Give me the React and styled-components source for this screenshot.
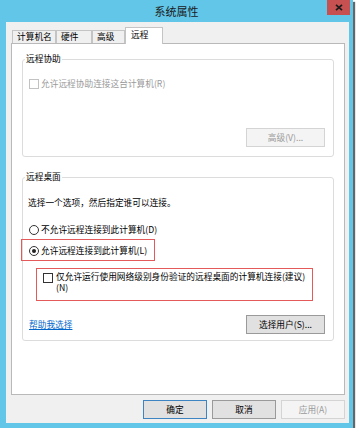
import React from 'react';
import styled, { createGlobalStyle } from 'styled-components';

const Global = createGlobalStyle`
  html, body { margin: 0; padding: 0; background: #ffffff; }
  body {
    font-family: "Noto Sans CJK SC", "Noto Sans", sans-serif;
    font-size: 8.7px;
    color: #000;
  }
  * { box-sizing: border-box; }
`;

const Window = styled.div`
  width: 353px;
  height: 428px;
  background: #62c6e8;
  display: flex;
  flex-direction: column;
  box-shadow: 2px 2px 1px rgba(0, 0, 0, 0.6);
`;

const TitleBar = styled.div`
  height: 22px;
  flex: none;
  display: grid;
  grid-template-columns: 1fr auto 1fr;
  padding: 0 3px;
`;

const Title = styled.div`
  grid-column: 2;
  font-size: 11px;
  line-height: 21px;
  padding-top: 1px;
  color: #1a1a1a;
`;

const CloseButton = styled.div`
  grid-column: 3;
  justify-self: end;
  align-self: start;
  width: 23px;
  height: 15px;
  background: #c75050;
  display: flex;
  align-items: center;
  justify-content: center;
`;

const Client = styled.div`
  flex: 1;
  margin: 0 4px 5px 6px;
  background: #f0f0f0;
  display: flex;
  flex-direction: column;
  padding-bottom: 4px;
`;

const TabRow = styled.div`
  display: flex;
  align-items: flex-end;
  padding: 5px 0 0 6px;
`;

const Tab = styled.div`
  width: ${(p) => p.$w}px;
  height: ${(p) => (p.$active ? 17 : 13)}px;
  margin-bottom: ${(p) => (p.$active ? -1 : 0)}px;
  border: 1px solid #c4c4c4;
  border-bottom: none;
  background: ${(p) => (p.$active ? '#ffffff' : '#f0f0f0')};
  padding-left: ${(p) => (p.$active ? 5 : 4)}px;
  line-height: ${(p) => (p.$active ? 14 : 12)}px;
  white-space: nowrap;
  position: relative;
  z-index: ${(p) => (p.$active ? 1 : 0)};
`;

const Panel = styled.div`
  flex: 1;
  margin: 0 4px 0 5px;
  background: #ffffff;
  border: 1px solid #b9b9b9;
  padding: 9px 10px 0 10px;
  display: flex;
  flex-direction: column;
`;

const Group = styled.fieldset`
  margin: ${(p) => p.$mt || 0}px 0 0 0;
  border: 1px solid #dcdcdc;
  border-radius: 3px;
  padding: ${(p) => p.$pt}px 8px ${(p) => p.$pb}px 6px;
  min-width: 0;
  display: flex;
  flex-direction: column;
`;

const Legend = styled.legend`
  padding: 0 1px;
  margin-left: -4px;
  line-height: 12px;
  font-size: 8.7px;
`;

const Row = styled.div`
  display: flex;
  align-items: center;
  gap: 3px;
  height: 12px;
  line-height: 12px;
  margin-top: ${(p) => p.$mt || 0}px;
  white-space: nowrap;
  color: ${(p) => (p.$disabled ? '#9a9a9a' : '#000')};
`;

const Text = styled.div`
  line-height: 12px;
  margin-left: -1px;
  white-space: nowrap;
`;

const Check = styled.span`
  flex: none;
  width: 10px;
  height: 10px;
  margin-top: ${(p) => p.$mt || 0}px;
  border: 1px solid ${(p) => (p.$disabled ? '#c2c2c2' : '#333333')};
  background: #ffffff;
`;

const Radio = styled.span`
  flex: none;
  width: 10px;
  height: 10px;
  border-radius: 50%;
  border: 1px solid #333333;
  background: #ffffff;
  display: flex;
  align-items: center;
  justify-content: center;
  &::after {
    content: '';
    display: ${(p) => (p.$checked ? 'block' : 'none')};
    width: 4px;
    height: 4px;
    border-radius: 50%;
    background: #222222;
  }
`;

const Highlight = styled.div`
  width: ${(p) => p.$w}px;
  margin: ${(p) => p.$mt}px 0 0 ${(p) => p.$ml}px;
  border: 1px solid #e45a5a;
  padding: ${(p) => p.$pad};
`;

const MultiRow = styled.div`
  display: flex;
  align-items: flex-start;
  gap: 3px;
`;

const MultiText = styled.div`
  line-height: 11px;
  white-space: nowrap;
`;

const ButtonLine = styled.div`
  display: flex;
  justify-content: flex-end;
  margin-top: ${(p) => p.$mt}px;
`;

const FooterLine = styled.div`
  display: flex;
  align-items: center;
  justify-content: space-between;
  margin-top: 14px;
`;

const Link = styled.a`
  color: #0066cc;
  text-decoration: underline;
  line-height: 12px;
  cursor: pointer;
`;

const Button = styled.button`
  width: ${(p) => p.$w}px;
  height: 19px;
  padding: 0;
  font-family: inherit;
  font-size: 8.7px;
  line-height: 17px;
  text-align: center;
  border: 1px solid
    ${(p) => (p.$default ? '#3d85c2' : p.disabled ? '#d4d4d4' : '#9a9a9a')};
  background: ${(p) => (p.disabled ? '#f4f4f4' : '#e1e1e1')};
  color: ${(p) => (p.disabled ? '#9a9a9a' : '#000')};
`;

const DialogButtons = styled.div`
  display: flex;
  justify-content: flex-end;
  gap: 5px;
  margin-top: 5px;
  padding-right: 4px;
`;

export default function App() {
  return (
    <>
      <Global />
      <Window>
        <TitleBar>
          <Title>系统属性</Title>
          <CloseButton>
            <svg width="8" height="7" viewBox="0 0 8 7">
              <path d="M1 0.8 L7 6.2 M7 0.8 L1 6.2" stroke="#1b1b1b" strokeWidth="1.7" />
            </svg>
          </CloseButton>
        </TitleBar>
        <Client>
          <TabRow>
            <Tab $w={44}>计算机名</Tab>
            <Tab $w={36}>硬件</Tab>
            <Tab $w={33}>高级</Tab>
            <Tab $w={38} $active>远程</Tab>
          </TabRow>
          <Panel>
            <Group $pt={13} $pb={9}>
              <Legend>远程协助</Legend>
              <Row $disabled>
                <Check $disabled />
                <Text>允许远程协助连接这台计算机(R)</Text>
              </Row>
              <ButtonLine $mt={38}>
                <Button $w={79} disabled>高级(V)...</Button>
              </ButtonLine>
            </Group>
            <Group $mt={14} $pt={14} $pb={6}>
              <Legend>远程桌面</Legend>
              <Row>
                <Text>选择一个选项，然后指定谁可以连接。</Text>
              </Row>
              <Row $mt={15}>
                <Radio />
                <Text>不允许远程连接到此计算机(D)</Text>
              </Row>
              <Highlight $w={134} $mt={3} $ml={-8} $pad="5px 0 3px 7px">
                <Row>
                  <Radio $checked />
                  <Text>允许远程连接到此计算机(L)</Text>
                </Row>
              </Highlight>
              <Highlight $w={277} $mt={7} $ml={7} $pad="2px 0 7px 6px">
                <MultiRow>
                  <Check $mt={2} />
                  <MultiText>
                    仅允许运行使用网络级别身份验证的远程桌面的计算机连接(建议)
                    <br />
                    (N)
                  </MultiText>
                </MultiRow>
              </Highlight>
              <FooterLine>
                <Link>帮助我选择</Link>
                <Button $w={79}>选择用户(S)...</Button>
              </FooterLine>
            </Group>
          </Panel>
          <DialogButtons>
            <Button $w={64} $default>确定</Button>
            <Button $w={64}>取消</Button>
            <Button $w={64} disabled>应用(A)</Button>
          </DialogButtons>
        </Client>
      </Window>
    </>
  );
}
